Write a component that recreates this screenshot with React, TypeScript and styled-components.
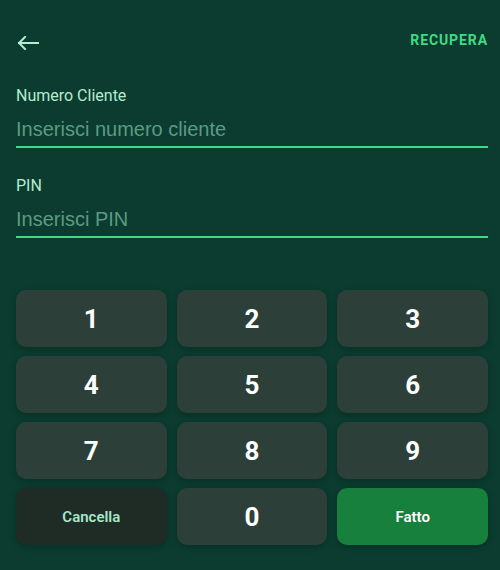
import React from "react";
import styled, { createGlobalStyle } from "styled-components";

const GlobalStyle = createGlobalStyle`
  html, body {
    margin: 0;
    padding: 0;
    background: #0b3c2f;
  }
  body {
    font-family: Roboto, "Liberation Sans", sans-serif;
  }
`;

const Screen = styled.div`
  width: 500px;
  height: 570px;
  box-sizing: border-box;
  padding: 24px 12px 0 16px;
  background: #0b3c2f;
  display: flex;
  flex-direction: column;
`;

const Header = styled.div`
  height: 36px;
  display: flex;
  align-items: center;
  justify-content: space-between;
`;

const BackButton = styled.button`
  background: none;
  border: none;
  padding: 0;
  margin: 1px 0 0 1px;
  display: flex;
  color: #b4ecd0;
  cursor: pointer;
`;

const TextLink = styled.button`
  background: none;
  border: none;
  padding: 0;
  margin-top: -5px;
  color: #3ddc84;
  font-family: Roboto, sans-serif;
  font-size: 14px;
  font-weight: 700;
  letter-spacing: 0.9px;
  cursor: pointer;
`;

const Field = styled.label<{ $first?: boolean }>`
  display: flex;
  flex-direction: column;
  gap: 11px;
  margin-top: ${(p) => (p.$first ? "26px" : "28px")};
`;

const FieldLabel = styled.span`
  font-size: 16px;
  line-height: 20px;
  color: #b4ecd0;
`;

const FieldInput = styled.input`
  font-family: "Liberation Sans", Arial, sans-serif;
  font-size: 20px;
  line-height: 24px;
  height: 24px;
  padding: 0 0 5px;
  margin: 0;
  border: none;
  border-bottom: 2px solid #3ddc84;
  background: transparent;
  color: #ffffff;
  outline: none;
  width: 100%;
  box-sizing: content-box;

  &::placeholder {
    color: #5c9a82;
  }
`;

const Keypad = styled.div`
  margin-top: 52px;
  display: grid;
  grid-template-columns: repeat(3, 1fr);
  grid-auto-rows: 57px;
  column-gap: 10px;
  row-gap: 9px;
`;

type KeyKind = "digit" | "clear" | "done";

const Key = styled.button<{ $kind: KeyKind }>`
  border: none;
  border-radius: 10px;
  font-family: Roboto, sans-serif;
  cursor: pointer;
  box-shadow: 0 2px 6px rgba(0, 0, 0, 0.22);
  background: ${(p) =>
    p.$kind === "done" ? "#16803c" : p.$kind === "clear" ? "#1f2b25" : "#2c4039"};
  color: ${(p) => (p.$kind === "clear" ? "#a8e6c8" : "#ffffff")};
  font-size: ${(p) => (p.$kind === "digit" ? "26px" : "15px")};
  font-weight: ${(p) => (p.$kind === "digit" ? 700 : 600)};
`;

const digits = ["1", "2", "3", "4", "5", "6", "7", "8", "9"];

const BackArrow = () => (
  <svg width="22" height="14" viewBox="0 0 22 14" fill="none">
    <path
      d="M21 7H2M8 1L2 7l6 6"
      stroke="currentColor"
      strokeWidth="2"
      strokeLinecap="square"
    />
  </svg>
);

const App: React.FC = () => {
  return (
    <>
      <GlobalStyle />
      <Screen>
        <Header>
          <BackButton aria-label="Indietro">
            <BackArrow />
          </BackButton>
          <TextLink>RECUPERA</TextLink>
        </Header>

        <Field $first>
          <FieldLabel>Numero Cliente</FieldLabel>
          <FieldInput placeholder="Inserisci numero cliente" />
        </Field>

        <Field>
          <FieldLabel>PIN</FieldLabel>
          <FieldInput placeholder="Inserisci PIN" type="password" />
        </Field>

        <Keypad>
          {digits.map((d) => (
            <Key key={d} $kind="digit">
              {d}
            </Key>
          ))}
          <Key $kind="clear">Cancella</Key>
          <Key $kind="digit">0</Key>
          <Key $kind="done">Fatto</Key>
        </Keypad>
      </Screen>
    </>
  );
};

export default App;
